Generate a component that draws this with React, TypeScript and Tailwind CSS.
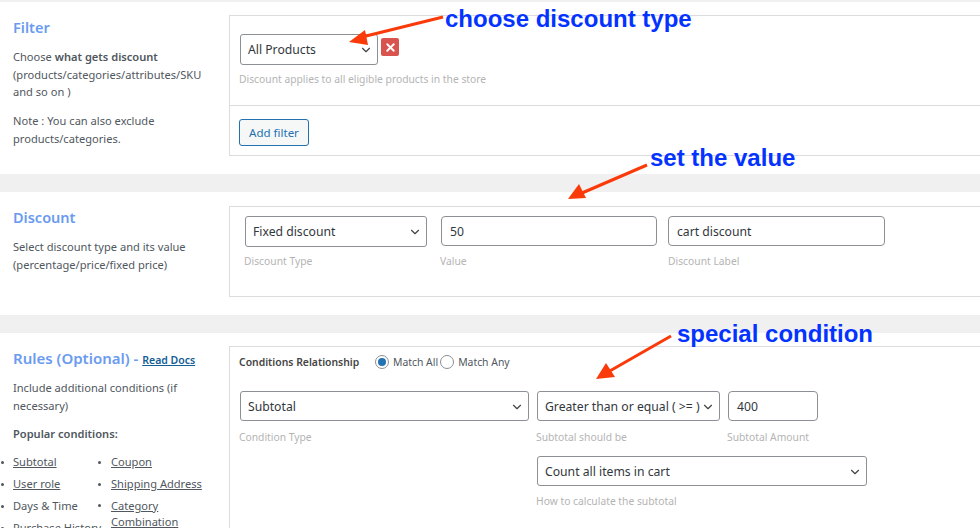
import { ReactNode } from "react"
import { ChevronDown, X } from "lucide-react"

const font = { fontFamily: '"Noto Sans", sans-serif' }

function SelectBox({ label, className }: { label: string; className: string }) {
  return (
    <div className={`flex items-center justify-between rounded-[3px] border border-[#8c8f94] bg-white pl-[7px] pr-[4px] text-[12.2px] text-[#32373c] ${className}`}>
      <span className="whitespace-nowrap">{label}</span>
      <ChevronDown className="h-[14px] w-[14px] shrink-0 text-[#444]" strokeWidth={2} />
    </div>
  )
}

function InputBox({ value, className }: { value: string; className: string }) {
  return (
    <div className={`flex items-center rounded-[4px] border border-[#8c8f94] bg-white pl-[8px] pt-[1px] text-[12.2px] text-[#32373c] ${className}`}>
      {value}
    </div>
  )
}

function Hint({ children, className = "" }: { children: ReactNode; className?: string }) {
  return <div className={`text-[10.3px] leading-[14px] text-[#b4b4b4] ${className}`}>{children}</div>
}

function Section({ title, side, panel, height, panelClass }: { title: ReactNode; side: ReactNode; panel: ReactNode; height: string; panelClass: string }) {
  return (
    <section className={`flex bg-white ${height}`}>
      <div className="w-[229px] shrink-0 pl-[13px] pr-[20px]">
        {title}
        {side}
      </div>
      <div className={`w-[760px] shrink-0 border border-[#dcdcde] ${panelClass}`}>{panel}</div>
    </section>
  )
}

export default function App() {
  return (
    <div className="relative h-[528px] w-[980px] overflow-hidden bg-[#f0f0f0] pt-[2px] text-[11.1px] leading-[18px] text-[#50575e]" style={font}>
      <Section
        height="h-[172px]"
        panelClass="mt-[13px] h-[141px]"
        title={<h2 className="mt-[15px] text-[14.5px] font-semibold leading-[20px] text-[#6a9bf0]">Filter</h2>}
        side={
          <div className="mt-[11px] leading-[17.5px]">
            <p>Choose <b className="font-semibold">what gets discount</b> (products/categories/attributes/SKU and so on )</p>
            <p className="mt-[11px]">Note : You can also exclude</p>
            <p className="mt-[1px]">products/categories.</p>
          </div>
        }
        panel={
          <div className="pt-[18px]">
            <div className="ml-[10px] flex items-start gap-[3px]">
              <SelectBox label="All Products" className="h-[31px] w-[138px]" />
              <div className="mt-[4px] flex h-[18px] w-[18px] items-center justify-center rounded-[2px] bg-[#d9534f]">
                <X className="h-[13px] w-[13px] text-white" strokeWidth={3.5} />
              </div>
            </div>
            <Hint className="ml-[9px] mt-[7px]">Discount applies to all eligible products in the store</Hint>
            <div className="mt-[19px] border-t border-[#dcdcde]" />
            <div className="ml-[9px] mt-[13px] flex h-[27px] w-[70px] items-center justify-center rounded-[3px] border border-[#2271b1] bg-[#f6f7f7] text-[11.5px] text-[#2271b1]">
              Add filter
            </div>
          </div>
        }
      />
      <div className="h-[18px]" />
      <Section
        height="h-[123px]"
        panelClass="mt-[14px] h-[91px]"
        title={<h2 className="mt-[15px] text-[14.5px] font-semibold leading-[20px] text-[#6a9bf0]">Discount</h2>}
        side={<p className="mt-[11px]">Select discount type and its value (percentage/price/fixed price)</p>}
        panel={
          <div className="pt-[9px]">
            <div className="flex">
              <div className="ml-[15px] w-[182px]">
                <SelectBox label="Fixed discount" className="h-[31px] w-[182px]" />
                <Hint className="-ml-[1px] mt-[7px]">Discount Type</Hint>
              </div>
              <div className="ml-[14px] w-[216px]">
                <InputBox value="50" className="h-[30px] w-[216px]" />
                <Hint className="-ml-[1px] mt-[8px]">Value</Hint>
              </div>
              <div className="ml-[11px] w-[217px]">
                <InputBox value="cart discount" className="h-[30px] w-[217px]" />
                <Hint className="mt-[8px]">Discount Label</Hint>
              </div>
            </div>
          </div>
        }
      />
      <div className="h-[18px]" />
      <Section
        height="h-[195px]"
        panelClass="mt-[13px] h-[200px]"
        title={
          <h2 className="mt-[15px] whitespace-nowrap text-[15px] font-semibold leading-[20px] text-[#6a9bf0]">
            Rules (Optional) - <a className="text-[10.5px] font-semibold text-[#135e96] underline">Read Docs</a>
          </h2>
        }
        side={
          <div className="mt-[9px]">
            <p>Include additional conditions (if necessary)</p>
            <p className="mt-[10px] font-semibold">Popular conditions:</p>
            <div className="-ml-[13px] mt-[8px] flex">
              <ul className="w-[98px] shrink-0">
                {[["Subtotal", true], ["User role", true], ["Days & Time", false], ["Purchase History", false]].map(([t, link]) => (
                  <li key={t as string} className="flex h-[22px] items-center whitespace-nowrap">
                    <span className="ml-[1px] mr-[9px] h-[3px] w-[3px] shrink-0 rounded-full bg-[#50575e]" />
                    <span className={link ? "underline" : ""}>{t}</span>
                  </li>
                ))}
              </ul>
              <ul className="w-[120px] shrink-0">
                {["Coupon", "Shipping Address"].map((t) => (
                  <li key={t} className="flex h-[22px] items-center whitespace-nowrap">
                    <span className="mr-[10px] h-[3px] w-[3px] shrink-0 rounded-full bg-[#50575e]" />
                    <span className="underline">{t}</span>
                  </li>
                ))}
                <li className="flex">
                  <span className="mr-[10px] mt-[9px] h-[3px] w-[3px] shrink-0 rounded-full bg-[#50575e]" />
                  <span className="mt-[3px] leading-[16px] underline">Category Combination</span>
                </li>
              </ul>
            </div>
          </div>
        }
        panel={
          <div className="pt-[6px]">
            <div className="ml-[9px] flex h-[18px] items-center text-[10.4px]">
              <b className="w-[136px] font-semibold text-[#444]">Conditions Relationship</b>
              <span className="mr-[4px] flex h-[14px] w-[14px] items-center justify-center rounded-full border border-[#8c8f94]">
                <span className="h-[8px] w-[8px] rounded-full bg-[#2271b1]" />
              </span>
              <span>Match All</span>
              <span className="ml-[2px] mr-[4px] h-[14px] w-[14px] rounded-full border border-[#8c8f94]" />
              <span>Match Any</span>
            </div>
            <div className="ml-[10px] mt-[20px] flex">
              <div className="w-[289px]">
                <SelectBox label="Subtotal" className="h-[30px] w-[289px] pt-[1px]" />
                <Hint className="-ml-[1px] mt-[9px]">Condition Type</Hint>
              </div>
              <div className="ml-[8px] w-[183px]">
                <SelectBox label="Greater than or equal ( >= )" className="h-[30px] w-[183px] pt-[1px]" />
                <Hint className="-ml-[1px] mt-[9px]">Subtotal should be</Hint>
              </div>
              <div className="ml-[8px] w-[90px]">
                <InputBox value="400" className="h-[30px] w-[90px]" />
                <Hint className="-ml-[1px] mt-[9px]">Subtotal Amount</Hint>
              </div>
            </div>
            <div className="ml-[307px] mt-[12px]">
              <SelectBox label="Count all items in cart" className="h-[30px] w-[330px] pt-[1px]" />
              <Hint className="-ml-[1px] mt-[8px]">How to calculate the subtotal</Hint>
            </div>
          </div>
        }
      />

      {/* annotations on top of the screenshot */}
      <svg className="pointer-events-none absolute left-0 top-0" width="980" height="528">
        <line x1="443" y1="17" x2="362" y2="37" stroke="#fb3a0a" strokeWidth="3" />
        <polygon points="349,42 365,30 368,45" fill="#fb3a0a" />
        <line x1="647" y1="165" x2="582" y2="193" stroke="#fb3a0a" strokeWidth="3" />
        <polygon points="568,199 579,184 586,198" fill="#fb3a0a" />
        <line x1="671" y1="336" x2="608" y2="372" stroke="#fb3a0a" strokeWidth="3" />
        <polygon points="596,379 606,363 615,377" fill="#fb3a0a" />
      </svg>
      <div className="absolute left-[445px] top-[4px] font-['Liberation_Sans',sans-serif] text-[24px] font-bold leading-[30px] text-[#0433ff]">choose discount type</div>
      <div className="absolute left-[650px] top-[143px] font-['Liberation_Sans',sans-serif] text-[24px] font-bold leading-[30px] text-[#0433ff]">set the value</div>
      <div className="absolute left-[677px] top-[319px] font-['Liberation_Sans',sans-serif] text-[24px] font-bold leading-[30px] text-[#0433ff]">special condition</div>
    </div>
  )
}
